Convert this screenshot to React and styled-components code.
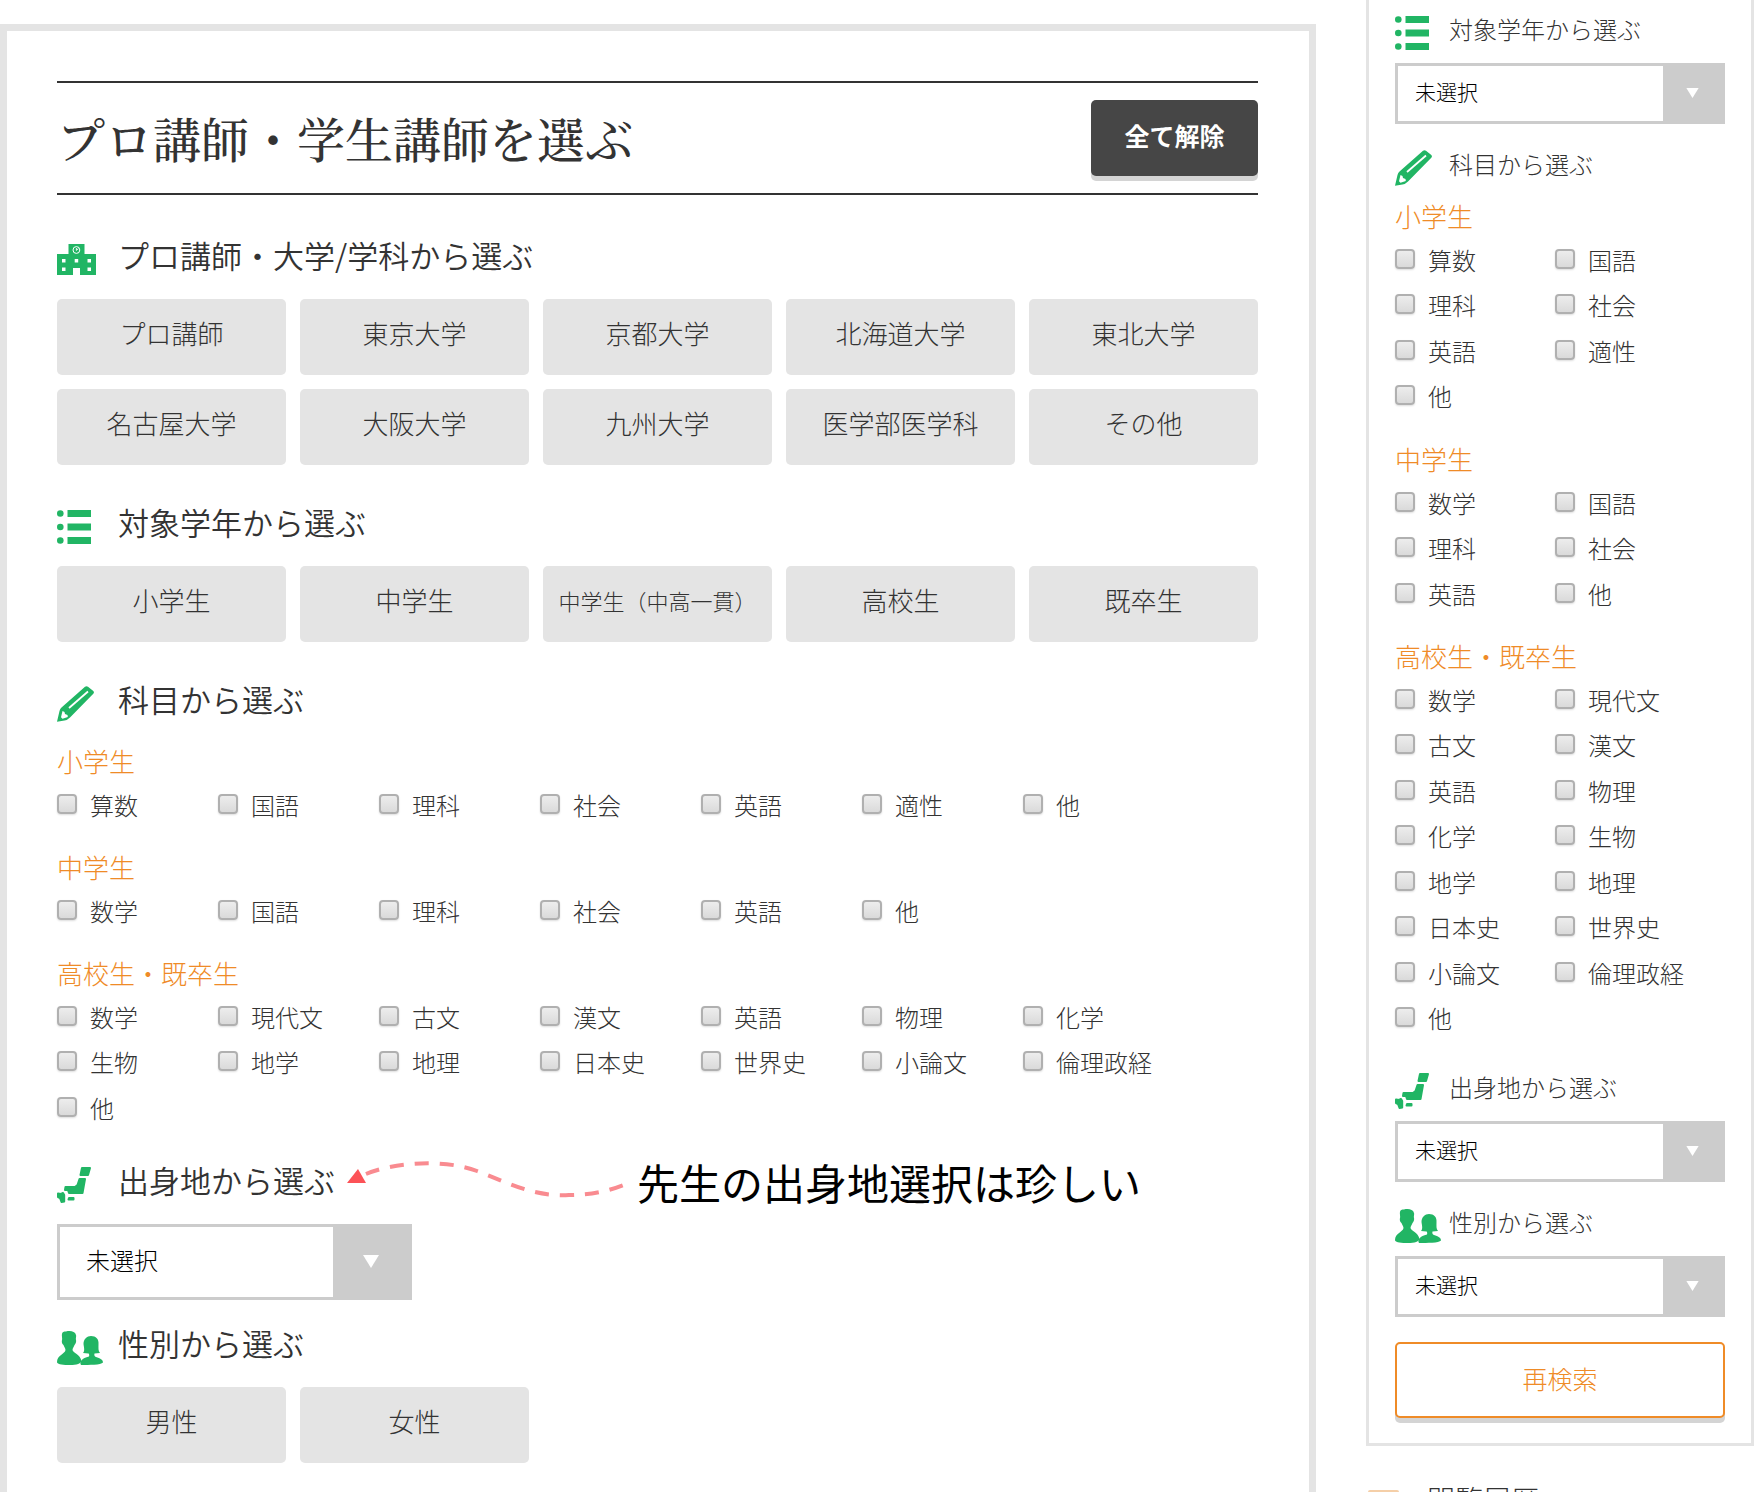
import React from 'react';

import styled, { createGlobalStyle } from 'styled-components';

const GlobalStyle = createGlobalStyle`
  * {
    box-sizing: border-box;
  }
  body {
    margin: 0;
    background-color: #fff;
    color: #333;
    font-family: "Noto Sans CJK JP", sans-serif;
    font-weight: 300;
  }
  button, input, select {
    font-family: inherit;
    font-weight: inherit;
    margin: 0;
  }
`;

const Page = styled.div`
  display: flex;
  align-items: flex-start;
  gap: 50px;
  height: 100vh;
  overflow: hidden;
`;

const SearchPanel = styled.main`
  flex: 1;
  min-width: 0;
  margin-top: 24px;
  padding: 50px 51px 60px 50px;
  border: 7px solid #e4e4e4;
`;
const TitleBar = styled.header`
  display: flex;
  align-items: center;
  justify-content: space-between;
  padding: 17px 0;
  margin-bottom: 39px;
  border-top: 2px solid #333;
  border-bottom: 2px solid #333;
`;
const Title = styled.h1`
  margin: 0;
  font-family: "Noto Serif CJK JP", "Noto Sans CJK JP", serif;
  font-size: 48px;
  font-weight: 500;
  line-height: 76px;
`;
const ClearButton = styled.button`
  width: 167px;
  height: 76px;
  padding: 0 0 6px;
  border: 0;
  border-radius: 5px;
  background-color: #464646;
  box-shadow: 0 5px 0 #d4d4d4;
  color: #fff;
  font-size: 25px;
  font-weight: 700;
`;

const Section = styled.section`
  margin-bottom: ${({ $space }) => $space}px;
`;
const Heading = styled.div`
  display: flex;
  align-items: center;
  height: ${({ $small }) => ($small ? 40 : 46)}px;
  margin-bottom: ${({ $small }) => ($small ? 13 : 19)}px;
`;
const HeadingIcon = styled.span`
  display: flex;
  flex-shrink: 0;
  padding-top: 5px;
  width: ${({ $small }) => ($small ? 54 : 61)}px;
`;
const HeadingText = styled.h2`
  margin: 0;
  padding-bottom: ${({ $small }) => ($small ? 2 : 4)}px;
  font-size: ${({ $small }) => ($small ? 24 : 31)}px;
  font-weight: ${({ $small }) => ($small ? 300 : 350)};
  line-height: 38px;
  white-space: nowrap;
`;
const Note = styled.p`
  display: flex;
  align-items: center;
  gap: 10px;
  margin: 0 0 0 12px;
  color: #000;
  font-size: 42px;
  font-weight: 400;
  line-height: 46px;
  white-space: nowrap;
`;

const ButtonGrid = styled.div`
  display: grid;
  grid-template-columns: repeat(5, 1fr);
  gap: 14px;
`;
const ChoiceButton = styled.button`
  height: 76px;
  padding: 0 0 9px;
  border: 0;
  border-radius: 5px;
  background-color: #e4e4e4;
  color: #333;
  font-size: ${({ $compact }) => ($compact ? 22 : 26)}px;
  white-space: nowrap;
`;

const Group = styled.fieldset`
  min-width: 0;
  margin: 0 0 23px;
  padding: 0;
  border: 0;

  &:last-child {
    margin-bottom: 0;
  }
`;
const GroupName = styled.legend`
  padding: 0 0 2px;
  color: #ef8b27;
  font-size: 26px;
  line-height: 36px;
`;
const CheckGrid = styled.div`
  display: grid;
  grid-template-columns: repeat(auto-fill, ${({ $small }) => ($small ? 160 : 161)}px);
  grid-auto-rows: 45px 46px;
`;
const CheckLabel = styled.label`
  display: flex;
  align-items: center;
  gap: 13px;
  font-size: 24px;
  line-height: 44px;
  white-space: nowrap;
`;
const CheckText = styled.span`
  padding-top: 2px;
`;
const CheckBox = styled.input`
  appearance: none;
  flex-shrink: 0;
  width: 20px;
  height: 20px;
  border: 2px solid #b0b0b0;
  border-radius: 4px;
  background: linear-gradient(#ededed, #dadada);
  box-shadow: 0 1px 2px #ddd;

  &:checked {
    background: #21b564;
  }
`;

const SelectBox = styled.div`
  display: grid;
  grid-template-columns: 1fr ${({ $small }) => ($small ? 62 : 79)}px;
  align-items: center;
  width: ${({ $small }) => ($small ? '100%' : '355px')};
  height: ${({ $small }) => ($small ? 61 : 76)}px;
  background: #ccc;
`;
const Select = styled.select`
  grid-area: 1 / 1 / 2 / 3;
  appearance: none;
  width: 100%;
  height: 100%;
  padding: ${({ $small }) => ($small ? '0 65px 6px 17px' : '0 82px 6px 26px')};
  border: 3px solid #ccc;
  border-radius: 0;
  background: linear-gradient(#ccc, #ccc) right / ${({ $small }) => ($small ? 59 : 76)}px 100% no-repeat #fff;
  color: #000;
  font-size: ${({ $small }) => ($small ? 21 : 24)}px;
`;
const SelectArrow = styled.svg`
  grid-area: 1 / 2 / 2 / 3;
  justify-self: center;
  z-index: 1;
  margin: 0 3px 2px 0;
  pointer-events: none;
`;

const SideColumn = styled.aside`
  width: 388px;
  flex-shrink: 0;
`;
const SidePanel = styled.div`
  padding: 10px 26px 25px;
  border: 3px solid #e4e4e4;
  border-top: 0;
`;
const SearchButton = styled.button`
  display: block;
  width: 100%;
  height: 76px;
  padding: 0 0 4px;
  border: 2px solid #ef8b27;
  border-radius: 5px;
  background-color: #fff;
  box-shadow: 0 5px 0 #d4d4d4;
  color: #ef8b27;
  font-size: 25px;
`;
const History = styled.div`
  display: flex;
  align-items: flex-start;
  gap: 28px;
  padding: 38px 0 0 2px;
`;
const HistoryIcon = styled.svg`
  margin-top: 6px;
`;
const HistoryTitle = styled.h2`
  margin: 0;
  font-size: 28px;
  font-weight: 300;
  line-height: 30px;
`;

const SchoolIcon = () => (
  <svg width="39" height="31" viewBox="0 0 39 31" aria-hidden="true">
    <path fill="#21b564" d="M11.5 0H27.5V10H39V31H23V24H16V31H0V10H11.5Z" />
    <circle cx="19.4" cy="6" r="3.4" fill="none" stroke="#fff" strokeWidth="1" />
    <path d="M19.4 6.4V4M19.4 6.4L21.4 4.6" stroke="#fff" strokeWidth="0.9" />
    <path fill="#fff" d="M5 15h3.5v3.5H5zM17.7 15h3.5v3.5h-3.5zM30.5 15H34v3.5h-3.5zM5 23.5h3.5V27H5zM30.5 23.5H34V27h-3.5z" />
  </svg>
);

const ListIcon = () => (
  <svg width="34" height="34" viewBox="0 0 34 34" fill="#21b564" aria-hidden="true">
    <circle cx="3.3" cy="3.5" r="3.3" />
    <circle cx="3.3" cy="17" r="3.3" />
    <circle cx="3.3" cy="30.5" r="3.3" />
    <path d="M10.5 0H34V7H10.5zM10.5 13.5H34V20.5H10.5zM10.5 27H34V34H10.5z" />
  </svg>
);

const PencilIcon = () => (
  <svg width="37" height="36" viewBox="0 0 37 36" aria-hidden="true">
    <path fill="#21b564" d="M28 .8Q29.500 -.4 31 .8L36.300 5Q37.600 6.300 36.300 7.800L13 31.500Q10.500 34 7.500 34.500L0 35.800L2.500 25Q3 22.500 4.500 21.500Z" />
    <path d="M12 22L31 5.500" stroke="#fff" strokeWidth="1.8" />
    <path fill="#fff" d="M5.500 25L7.500 26L8 28L10.500 29L10.800 31L5.500 32.800L4 31.300Z" />
  </svg>
);

const JapanIcon = () => (
  <svg width="34" height="36" viewBox="0 0 34 36" fill="#21b564" stroke="#21b564" strokeWidth="2" strokeLinejoin="round" aria-hidden="true">
    <path d="M25 1H33L31 8H23.500Z" />
    <path d="M22.500 12H28L25.500 26H12L11 23H8L8.500 20H18L20.500 18Z" />
    <path d="M1 26.500L4 27L6 26L7.200 28V34.500L4.500 35L3 31L1 30Z" />
    <path d="M12 31H16.500V32.500H11.500Z" />
  </svg>
);

const PeopleIcon = () => (
  <svg width="46" height="34" viewBox="0 0 46 34" fill="#21b564" aria-hidden="true">
    <path d="M5 3C5 1 7 .5 9 .5C13 -.5 18 0 19 4C19.500 6 18.500 7 19 9C19.500 11 18.500 13 17.500 14C17 16 15.500 17 15.500 19C16 22 23 23 24.500 30C23 34 17 34 11 34C4 34 0 33 0 31C0 24 8 23 8.500 19C8.500 17 7 16 6.500 14C5 13 4.500 11 5 9C5.500 7 4.500 5 5 3Z" />
    <path d="M24 34C22 31 25 27 32 25.500C32.500 24 32 22.500 31.500 22.500L26 22C28 20 27 17 26.500 13C26.500 8 30 5 34 5C39 5 42 8 41.500 13C41.500 17 41 20 43 22L37.500 22.500C37 24 37.500 25.500 39 26C43 27.500 46 28.500 46 31.500C44 34 32 34 24 34Z" />
  </svg>
);

const CurvedArrow = () => (
  <svg width="280" height="46" viewBox="0 0 280 46" aria-hidden="true">
    <path d="M19 15C45 4 95 -1 130 12C160 23 185 38 222 36C245 36 262 32 279 25" fill="none" stroke="#f98b90" strokeWidth="4" strokeDasharray="14 11" />
    <path d="M0 24L11 10L19 24Z" fill="#fc5257" />
  </svg>
);

const HEADINGS = {
  university: { text: 'プロ講師・大学/学科から選ぶ', Icon: SchoolIcon },
  grade: { text: '対象学年から選ぶ', Icon: ListIcon },
  subject: { text: '科目から選ぶ', Icon: PencilIcon },
  home: { text: '出身地から選ぶ', Icon: JapanIcon },
  gender: { text: '性別から選ぶ', Icon: PeopleIcon },
};

const UNIVERSITIES = [
  'プロ講師', '東京大学', '京都大学', '北海道大学', '東北大学',
  '名古屋大学', '大阪大学', '九州大学', '医学部医学科', 'その他',
];
const GRADES = ['小学生', '中学生', '中学生（中高一貫）', '高校生', '既卒生'];
const GENDERS = ['男性', '女性'];

const SUBJECTS = [
  { name: '小学生', items: ['算数', '国語', '理科', '社会', '英語', '適性', '他'] },
  { name: '中学生', items: ['数学', '国語', '理科', '社会', '英語', '他'] },
  {
    name: '高校生・既卒生',
    items: [
      '数学', '現代文', '古文', '漢文', '英語', '物理', '化学', '生物',
      '地学', '地理', '日本史', '世界史', '小論文', '倫理政経', '他',
    ],
  },
];

const SectionHeading = ({ type, small, children }) => {
  const { text, Icon } = HEADINGS[type];
  return (
    <Heading $small={small}>
      <HeadingIcon $small={small}>
        <Icon />
      </HeadingIcon>
      <HeadingText $small={small}>{text}</HeadingText>
      {children}
    </Heading>
  );
};

const Choices = ({ items }) => (
  <ButtonGrid>
    {items.map((item) => (
      <ChoiceButton key={item} type="button" $compact={item.length > 6}>
        {item}
      </ChoiceButton>
    ))}
  </ButtonGrid>
);

const SubjectGroups = ({ small }) =>
  SUBJECTS.map(({ name, items }) => (
    <Group key={name}>
      <GroupName>{name}</GroupName>
      <CheckGrid $small={small}>
        {items.map((item) => (
          <CheckLabel key={item}>
            <CheckBox type="checkbox" name={name} value={item} />
            <CheckText>{item}</CheckText>
          </CheckLabel>
        ))}
      </CheckGrid>
    </Group>
  ));

const DropDown = ({ type, small }) => (
  <SelectBox $small={small}>
    <Select $small={small} aria-label={HEADINGS[type].text}>
      <option>未選択</option>
    </Select>
    <SelectArrow width={small ? 13 : 16} height={small ? 10 : 13} viewBox="0 0 16 13" aria-hidden="true">
      <path d="M0 0H16L8 13Z" fill="#fff" />
    </SelectArrow>
  </SelectBox>
);

const App = () => {
  return (
    <>
      <GlobalStyle />
      <Page>
        <SearchPanel>
          <TitleBar>
            <Title>プロ講師・学生講師を選ぶ</Title>
            <ClearButton type="button">全て解除</ClearButton>
          </TitleBar>
          <Section $space={36}>
            <SectionHeading type="university" />
            <Choices items={UNIVERSITIES} />
          </Section>
          <Section $space={36}>
            <SectionHeading type="grade" />
            <Choices items={GRADES} />
          </Section>
          <Section $space={30}>
            <SectionHeading type="subject" />
            <div>
              <SubjectGroups />
            </div>
          </Section>
          <Section $space={22}>
            <SectionHeading type="home">
              <Note>
                <CurvedArrow />
                先生の出身地選択は珍しい
              </Note>
            </SectionHeading>
            <DropDown type="home" />
          </Section>
          <Section $space={0}>
            <SectionHeading type="gender" />
            <Choices items={GENDERS} />
          </Section>
        </SearchPanel>
        <SideColumn>
          <SidePanel>
            <Section $space={21}>
              <SectionHeading type="grade" small />
              <DropDown type="grade" small />
            </Section>
            <Section $space={28}>
              <SectionHeading type="subject" small />
              <div>
                <SubjectGroups small />
              </div>
            </Section>
            <Section $space={21}>
              <SectionHeading type="home" small />
              <DropDown type="home" small />
            </Section>
            <Section $space={25}>
              <SectionHeading type="gender" small />
              <DropDown type="gender" small />
            </Section>
            <SearchButton type="button">再検索</SearchButton>
          </SidePanel>
          <History>
            <HistoryIcon width="31" height="28" viewBox="0 0 31 28" aria-hidden="true">
              <rect width="31" height="28" rx="2" fill="#f5cfa8" />
            </HistoryIcon>
            <HistoryTitle>閲覧履歴</HistoryTitle>
          </History>
        </SideColumn>
      </Page>
    </>
  );
};

export default App;
